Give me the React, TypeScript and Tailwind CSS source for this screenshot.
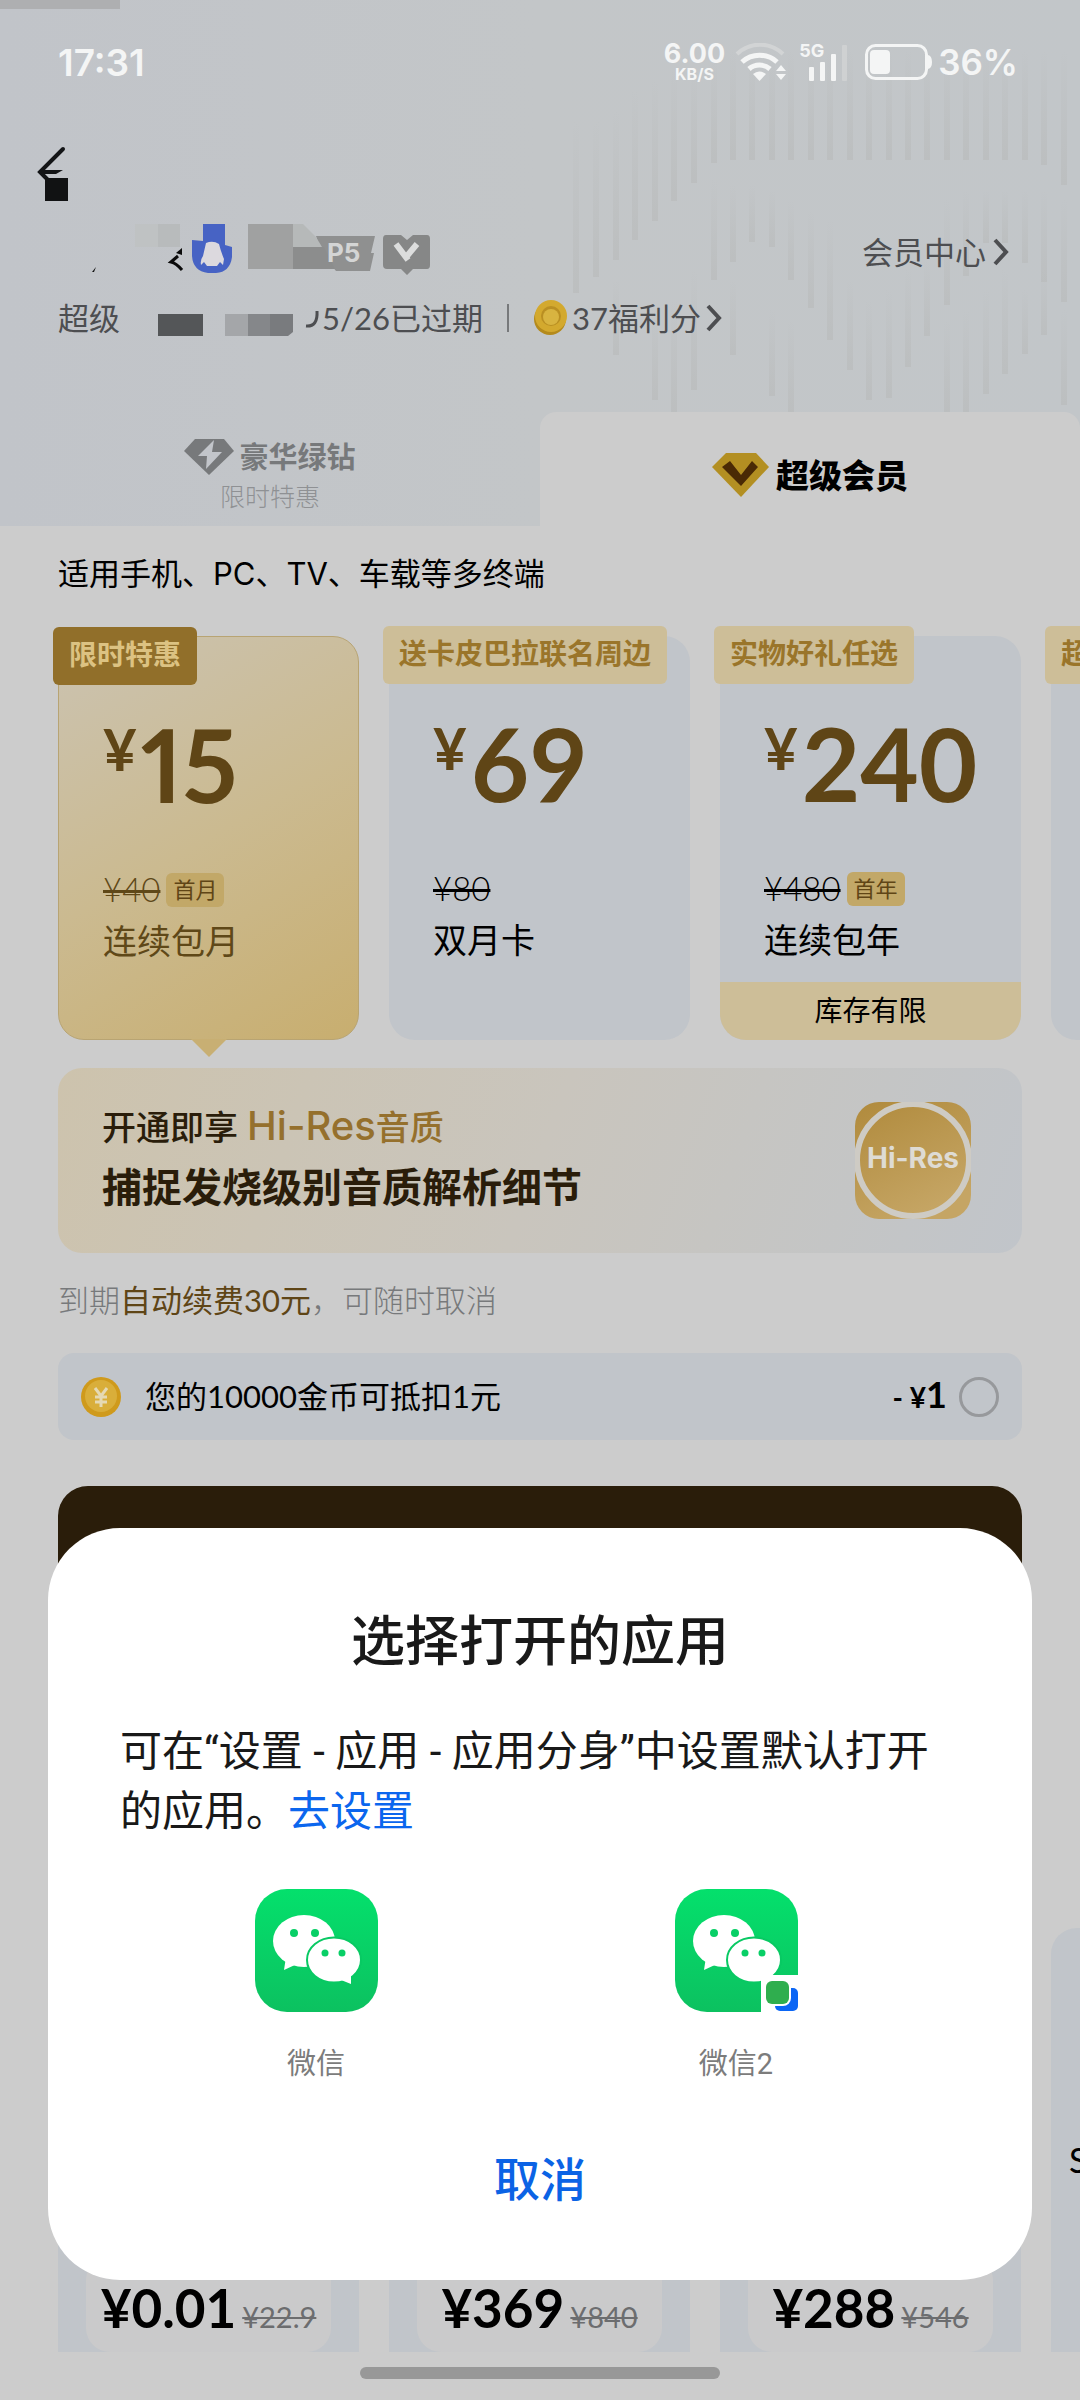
import { clsx } from "clsx";

type Plan = {
  tag: string;
  price: string;
  oldPrice: string;
  chip?: string;
  name: string;
  note?: string;
  active?: boolean;
};

const plans: Plan[] = [
  { tag: "限时特惠", price: "15", oldPrice: "¥40", chip: "首月", name: "连续包月", active: true },
  { tag: "送卡皮巴拉联名周边", price: "69", oldPrice: "¥80", name: "双月卡" },
  { tag: "实物好礼任选", price: "240", oldPrice: "¥480", chip: "首年", name: "连续包年", note: "库存有限" },
  { tag: "超值", price: "", oldPrice: "", name: "" },
];

const deals = [
  { price: "¥0.01", oldPrice: "¥22.9" },
  { price: "¥369", oldPrice: "¥840" },
  { price: "¥288", oldPrice: "¥546" },
];

// [x, start, end] of each stripe in the header artwork
const stripes = [
  [36, 120, 293], [56, 120, 277], [76, 110, 260], [95, 90, 240], [115, 80, 221],
  [134, 70, 201], [154, 70, 183], [174, 60, 163], [193, 50, 160], [212, 50, 160],
  [232, 50, 160], [251, 50, 160], [271, 50, 160], [290, 50, 160], [310, 50, 160],
  [329, 50, 160], [349, 50, 160], [368, 50, 160], [387, 50, 160], [407, 50, 160],
  [426, 50, 160], [446, 50, 160], [465, 50, 160], [485, 50, 160], [504, 50, 165],
  [524, 50, 185], [174, 180, 280], [193, 185, 262], [212, 185, 242], [232, 190, 247],
  [251, 200, 280], [271, 210, 308], [290, 220, 340], [407, 200, 305], [426, 190, 276],
  [446, 190, 243], [465, 190, 243], [485, 190, 263], [504, 190, 282], [524, 200, 302],
  [76, 280, 355], [154, 270, 390], [193, 280, 355], [134, 300, 412], [115, 310, 400],
  [232, 310, 396], [251, 320, 412], [310, 280, 370], [329, 300, 400], [349, 290, 398],
  [368, 270, 367], [387, 260, 336], [407, 320, 412], [426, 310, 412], [446, 290, 394],
  [465, 270, 374], [485, 290, 354], [504, 270, 335], [524, 310, 405],
];

const HeaderArt = () => (
  <svg className="absolute right-0 top-0" width="540" height="412" viewBox="0 0 540 412" aria-hidden="true">
    <defs>
      <linearGradient id="stripe" x1="0" y1="0" x2="0" y2="1">
        <stop offset="0" stopColor="#b8baba" stopOpacity="0" />
        <stop offset="1" stopColor="#b8baba" stopOpacity="0.6" />
      </linearGradient>
    </defs>
    {stripes.map(([x, start, end], i) => (
      <rect key={i} x={x - 3} y={start} width="6" height={end - start} fill="url(#stripe)" />
    ))}
  </svg>
);

const Chevron = () => (
  <svg width="18" height="30" viewBox="0 0 18 30" fill="none" stroke="#4d4e51" strokeWidth="4" aria-hidden="true">
    <path d="M3 3 L14 15 L3 27" />
  </svg>
);

const StatusBar = () => (
  <div className="flex h-[124px] items-center justify-between pl-[58px] pr-[62px] font-['Inter',sans-serif] font-bold text-[#f4f5f5]">
    <span className="text-[37px] font-semibold leading-none">17:31</span>
    <div className="flex items-center">
      <div className="flex flex-col items-center">
        <span className="text-[27px] leading-6">6.00</span>
        <span className="text-base leading-4">KB/S</span>
      </div>
      <svg className="ml-2.5" width="52" height="38" viewBox="0 0 52 38" fill="none" aria-hidden="true">
        <path d="M2 11 A33 33 0 0 1 48 11" stroke="#d2d4d5" strokeWidth="4" />
        <path d="M7 19 A26 26 0 0 1 42 19" stroke="#f4f5f5" strokeWidth="5" />
        <path d="M14 26 A16 16 0 0 1 35 26" stroke="#f4f5f5" strokeWidth="5" />
        <path d="M18 31 Q24 26 31 31 L24.500 38 Z" fill="#f4f5f5" />
        <path d="M41 28 L46 22 L51 28 Z M41 31 L46 37 L51 31 Z" fill="#f4f5f5" />
      </svg>
      <div className="relative ml-3">
        <span className="absolute left-0 top-0 text-lg leading-4">5G</span>
        <svg width="50" height="38" viewBox="0 0 50 38" fill="#f4f5f5" aria-hidden="true">
          <rect x="10" y="24" width="5" height="14" rx="1" />
          <rect x="21" y="19" width="5" height="19" rx="1" />
          <rect x="32" y="11" width="5" height="27" rx="1" />
          <rect x="43" y="2" width="5" height="36" rx="1" fill="#cfd1d2" />
        </svg>
      </div>
      <svg className="ml-4" width="67" height="36" viewBox="0 0 67 36" aria-hidden="true">
        <rect x="1.500" y="1.500" width="60" height="33" rx="9" fill="none" stroke="#f4f5f5" strokeWidth="3" />
        <rect x="5" y="6" width="20" height="24" rx="4" fill="#f4f5f5" />
        <path d="M63 11 Q67 12 67 18 Q67 24 63 25 Z" fill="#f4f5f5" />
      </svg>
      <span className="ml-1.5 text-[35px] font-semibold leading-none">36%</span>
    </div>
  </div>
);

const BackIcon = () => (
  <svg width="34" height="58" viewBox="0 0 34 58" aria-hidden="true">
    <path d="M27 4 L4 27 L12 35" fill="none" stroke="#131416" strokeWidth="4" strokeLinecap="round" />
    <path d="M4 25 H27 L20 29 H4 Z" fill="#131416" />
    <rect x="9" y="33" width="23" height="23" fill="#111213" />
  </svg>
);

// Nickname and level badges, partly covered by mosaic
const UserBadges = () => (
  <svg width="350" height="56" viewBox="84 224 350 56" aria-label="P5">
    <rect x="135" y="224" width="23" height="23" fill="#bfc2c3" />
    <rect x="158" y="224" width="22" height="23" fill="#b8bbbc" />
    <path d="M92 272 L96 267 L94 272 Z" fill="#111" />
    <path d="M182 270 Q176 263 171 262 L178 256" fill="none" stroke="#0b0b0b" strokeWidth="3" />
    <path d="M176 253 L182 248 L182 255 Z" fill="#0b0b0b" />
    <path d="M203 224 H225 V245 L232 247 V257 Q230 272 216 273 H208 Q193 271 192 256 V240 L203 241 Z" fill="#4763c4" />
    <path d="M206 243 Q213 240 219 244 Q221 252 224 259 L223 265 L220 262 L217 266 H207 L204 262 L201 265 Q200 260 203 256 Z" fill="#dcd9de" />
    <path d="M316 236 H375 L371 253 H374 L370 271 H336 L322 254 Z" fill="#8f9090" />
    <path d="M248 224 H293 V269 H248 Z" fill="#a0a1a1" />
    <path d="M293 224 H303 L316 237 L322 247 H293 Z" fill="#b6b9b9" />
    <path d="M293 247 H324 L335 269 H293 Z" fill="#8c8d8d" />
    <text x="327" y="262" fontSize="26" fontWeight="700" fill="#d4d5d5" fontFamily="Inter, sans-serif">P5</text>
    <path d="M386 235 H401 L407 240 L413 235 H427 Q430 235 430 239 V265 Q430 269 427 269 H413 L407 275 L401 269 H387 Q383 269 383 265 V239 Q383 235 386 235 Z" fill="#868787" />
    <path d="M396 244 L408 260 M407 256 L417 244" fill="none" stroke="#dcdddd" strokeWidth="6" />
  </svg>
);

const UserInfo = () => (
  <>
    <div className="flex h-14 items-center justify-between pl-[84px] pr-[70px]">
      <UserBadges />
      <a href="#center" className="flex items-center gap-1.5">
        会员中心
        <Chevron />
      </a>
    </div>
    <div className="flex h-[76px] items-center pl-[58px]">
      <span>超级</span>
      <svg width="202" height="36" viewBox="120 300 202 36" aria-hidden="true">
        <rect x="158" y="314" width="45" height="22" fill="#545658" />
        <rect x="225" y="314" width="23" height="22" fill="#a4a6a9" />
        <rect x="248" y="314" width="22" height="22" fill="#85878a" />
        <path d="M270 314 H293 V332 L288 336 H270 Z" fill="#797b7e" />
        <path d="M317 311 Q318 327 306 326" fill="none" stroke="#4d4e51" strokeWidth="3" />
      </svg>
      <span>5/26已过期</span>
      <span className="ml-6 h-7 w-0.5 bg-[#77797b]" />
      <svg className="ml-6" width="35" height="36" viewBox="0 0 35 36" aria-hidden="true">
        <circle cx="17" cy="19" r="16" fill="#b48a1c" />
        <circle cx="18" cy="16" r="16" fill="#d3a92e" />
        <circle cx="18" cy="16" r="10" fill="#b98f22" />
        <circle cx="18" cy="17" r="8" fill="#d8b440" />
      </svg>
      <a href="#points" className="ml-1 flex items-center gap-1">
        37福利分
        <Chevron />
      </a>
    </div>
  </>
);

const Tabs = () => (
  <div className="mt-14 grid h-[114px] grid-cols-2" role="tablist">
    <button role="tab" aria-selected="false" className="flex flex-col items-center pt-6">
      <span className="flex items-center gap-1 text-[29px] font-bold leading-[42px] text-[#77797b]">
        <svg width="51" height="38" viewBox="0 0 51 38" aria-hidden="true">
          <path d="M11 1 H40 L50 13 L25 37 L0 13 Z" fill="#77797b" />
          <path d="M30 2 L14 18 H23 L22 31 L38 14 H28 Z" fill="#c2c5ca" />
        </svg>
        豪华绿钻
      </span>
      <span className="text-[25px] font-light leading-9 text-[#8f9194]">限时特惠</span>
    </button>
    <button
      role="tab"
      aria-selected="true"
      className="flex items-center justify-center gap-1.5 rounded-t-2xl bg-[#ccc] pt-3 text-[33px] font-black text-black"
    >
      <svg width="58" height="46" viewBox="0 0 58 46" aria-hidden="true">
        <path d="M14 1 H44 L57 15 L29 45 L0 15 Z" fill="#b38f22" />
        <path d="M10 15 L18 9 L29 23 L40 9 L46 15 L29 34 Z" fill="#4a2a05" />
      </svg>
      超级会员
    </button>
  </div>
);

const PlanCard = ({ plan }: { plan: Plan }) => (
  <button
    className={clsx(
      "relative flex h-[404px] w-[301px] shrink-0 flex-col rounded-[26px] text-left",
      plan.active
        ? "border border-[#b8a473] bg-linear-150 from-[#cbc3b1] via-[#cbba90] to-[#c8ae6f] text-[#5f4818]"
        : "bg-[#c1c5ca] text-black"
    )}
  >
    <span
      className={clsx(
        "absolute -left-1.5 -top-2.5 flex h-[58px] items-center whitespace-nowrap rounded-md px-4 pb-1 text-[28px] font-bold leading-none",
        plan.active ? "bg-[#916f2a] text-[#dcc282]" : "bg-[#cdbe98] text-[#9a752a]"
      )}
    >
      {plan.tag}
    </span>
    {plan.price && (
      <span className="flex grow flex-col pl-11 pt-[75px]">
        <span className="flex items-start gap-1 font-bold leading-none text-[#5f4516]">
          <span className="text-[58px] leading-[74px]">¥</span>
          <span className={clsx("text-[101px] leading-[104px]", plan.active && "proportional-nums")}>
            {plan.price}
          </span>
        </span>
        <span className="mt-[53px] flex h-[42px] items-center gap-1.5 text-[33px] font-light">
          <s className="decoration-[3px]">{plan.oldPrice}</s>
          {plan.chip && (
            <span className="rounded-md bg-[#c2a868] px-[7px] text-[22px] font-normal leading-[34px] text-[#5f4516]">
              {plan.chip}
            </span>
          )}
        </span>
        <span className="text-[34px] leading-[60px]">{plan.name}</span>
      </span>
    )}
    {plan.note && (
      <span className="h-[58px] rounded-b-[26px] bg-[#cdbe98] text-center text-[28px] leading-[56px]">{plan.note}</span>
    )}
    {plan.active && (
      <svg className="absolute left-[132px] top-full" width="36" height="18" viewBox="0 0 36 18" aria-hidden="true">
        <path d="M0 0 H36 L18 18 Z" fill="#c8af73" />
      </svg>
    )}
  </button>
);

const HiResIcon = () => (
  <svg width="116" height="117" viewBox="0 0 116 117" aria-hidden="true">
    <defs>
      <linearGradient id="gold" x1="0" y1="0" x2="0.500" y2="1">
        <stop offset="0" stopColor="#b08a3c" />
        <stop offset="1" stopColor="#c5a564" />
      </linearGradient>
    </defs>
    <rect width="116" height="117" rx="24" fill="url(#gold)" />
    <circle cx="58" cy="58" r="56" fill="none" stroke="#cecbc4" strokeWidth="6" />
    <text x="58" y="66" textAnchor="middle" fontSize="28" fontWeight="700" fill="#dedbd4" fontFamily="Inter, sans-serif">
      Hi-Res
    </text>
  </svg>
);

const CoinOffer = () => (
  <label className="mt-1.5 flex h-[87px] items-center rounded-2xl bg-[#c1c5ca] px-[23px] text-[31px] text-black">
    <svg width="40" height="40" viewBox="0 0 40 40" aria-hidden="true">
      <circle cx="20" cy="20" r="20" fill="#cf9a1c" />
      <circle cx="20" cy="19" r="16" fill="#d9ae3a" />
      <path d="M14 11 L20 19 L26 11 M20 19 V30 M14 20 H26 M14 25 H26" fill="none" stroke="#e5d9b4" strokeWidth="3" />
    </svg>
    <span className="ml-6 grow">您的10000金币可抵扣1元</span>
    <span className="font-bold">
      <span className="text-[28px]">- ¥</span>
      <span className="text-4xl">1</span>
    </span>
    <input
      type="radio"
      name="coins"
      className="ml-3 size-10 appearance-none rounded-full border-3 border-[#97999c]"
    />
  </label>
);

const WeChatIcon = ({ clone = false }: { clone?: boolean }) => (
  <svg width="123" height="123" viewBox="0 0 123 123" aria-hidden="true">
    <defs>
      <linearGradient id="wechat" x1="0" y1="0" x2="0" y2="1">
        <stop offset="0" stopColor="#04e06c" />
        <stop offset="1" stopColor="#0cc160" />
      </linearGradient>
    </defs>
    <rect width="123" height="123" rx="32" fill="url(#wechat)" />
    <ellipse cx="49" cy="52" rx="31" ry="26" fill="#fff" />
    <path d="M31 68 L29 81 L42 75 Z" fill="#fff" />
    <circle cx="39" cy="44" r="4" fill="#08cf66" />
    <circle cx="60" cy="44" r="4" fill="#08cf66" />
    <ellipse cx="79" cy="71" rx="27" ry="22.500" fill="#fff" stroke="#08c963" strokeWidth="2" />
    <path d="M86 91 L96 95 L96 86 Z" fill="#fff" />
    <circle cx="70" cy="64" r="3.500" fill="#08cf66" />
    <circle cx="87" cy="64" r="3.500" fill="#08cf66" />
    {clone && (
      <>
        <path d="M86 90 Q86 86 90 86 H123 V123 H86 Z" fill="#fff" />
        <rect x="100" y="99" width="23" height="23" rx="5" fill="#0b66f5" />
        <rect x="89" y="90" width="27" height="27" rx="8" fill="#fff" />
        <rect x="91" y="92" width="23" height="23" rx="6" fill="#2fae4e" />
      </>
    )}
  </svg>
);

const AppPicker = () => (
  <div
    role="dialog"
    aria-labelledby="picker-title"
    className="absolute inset-x-12 bottom-[120px] rounded-[72px] bg-white pb-14 pt-20 font-['Roboto','Noto_Sans_CJK_SC',sans-serif] text-[#191919]"
  >
    <h2 id="picker-title" className="text-center text-[54px] font-medium leading-[70px]">
      选择打开的应用
    </h2>
    <p className="mt-11 px-[72px] text-[42px] leading-[60px]">
      可在“设置 - 应用 - 应用分身”中设置默认打开的应用。
      <a href="#settings" className="text-[#0b66ee]">去设置</a>
    </p>
    <div className="mt-[47px] grid grid-cols-2 pl-[58px] pr-[86px]">
      <button className="flex flex-col items-center gap-[34px] text-[29px] leading-9 text-[#7c7c7c]">
        <WeChatIcon />
        微信
      </button>
      <button className="flex flex-col items-center gap-[34px] text-[29px] leading-9 text-[#7c7c7c]">
        <WeChatIcon clone />
        微信2
      </button>
    </div>
    <button className="mx-auto mt-[54px] block px-8 text-[46px] font-medium leading-[88px] text-[#0b63e5]">取消</button>
  </div>
);

const App = () => {
  return (
    <div className="relative flex min-h-screen flex-col overflow-hidden bg-[#ccc] font-['Lato','Noto_Sans_CJK_SC',sans-serif]">
      <header className="relative bg-linear-90 from-[#c1c4c9] via-[#c3c6c8] to-[#c2c6c9] text-[31px] leading-10 text-[#4d4e51]">
        <HeaderArt />
        <div className="absolute left-0 top-0 h-[9px] w-[120px] bg-[#aeafb1]" />
        <div className="relative">
          <StatusBar />
          <div className="flex h-[100px] items-center pl-9">
            <button aria-label="返回">
              <BackIcon />
            </button>
          </div>
          <UserInfo />
          <Tabs />
        </div>
      </header>

      <main className="flex grow flex-col px-[58px]">
        <p className="font-['Inter','Noto_Sans_CJK_SC',sans-serif] text-[31px] leading-[96px] text-black">
          适用手机、PC、TV、车载等多终端
        </p>

        {/* Plans */}
        <div className="mt-3.5 flex gap-[30px]">
          {plans.map((plan) => (
            <PlanCard key={plan.tag} plan={plan} />
          ))}
        </div>

        {/* Hi-Res banner */}
        <div className="mt-7 flex h-[185px] items-center justify-between rounded-3xl bg-linear-110 from-[#cdc3ad] via-[#c9c5bd] to-[#c1c5ca] pl-11 pr-[51px]">
          <div className="pb-2 font-['Inter','Noto_Sans_CJK_SC',sans-serif] text-[#2a1d0a]">
            <p className="text-[34px] font-medium leading-[60px]">
              开通即享 <span className="text-[#95702d]"><span className="text-[40px]">Hi-Res</span>音质</span>
            </p>
            <p className="text-[40px] font-bold leading-[60px]">捕捉发烧级别音质解析细节</p>
          </div>
          <HiResIcon />
        </div>

        <p className="text-[31px] font-light leading-[94px] text-[#77797b]">
          到期<span className="font-normal text-[#5f4516]">自动续费30元</span>，可随时取消
        </p>

        <CoinOffer />
        <button aria-label="立即开通" className="mt-[46px] h-[130px] shrink-0 rounded-[30px] bg-[#2a1d0a]" />

        {/* Bundles */}
        <div className="mt-auto flex h-[424px] gap-[30px]">
          {deals.map((deal) => (
            <div key={deal.price} className="flex w-[301px] shrink-0 flex-col justify-end rounded-t-[26px] bg-[#c1c5ca] px-7">
              <div className="flex h-24 items-baseline justify-center gap-1.5 whitespace-nowrap rounded-3xl bg-[#cacacb] pt-5">
                <span className="text-[53px] font-bold leading-[64px] text-black">{deal.price}</span>
                <s className="text-[29px] text-[#6c6d6f]">{deal.oldPrice}</s>
              </div>
            </div>
          ))}
          <div className="w-[301px] shrink-0 rounded-t-[26px] bg-[#c1c5ca] pl-[18px] pt-[212px] text-[34px] leading-10 text-black">
            SVIP
          </div>
        </div>
      </main>

      <div className="flex h-12 items-center justify-center pb-1.5">
        <div className="h-3 w-1/3 rounded-full bg-[#989898]" />
      </div>

      <AppPicker />
    </div>
  );
};

export default App;
